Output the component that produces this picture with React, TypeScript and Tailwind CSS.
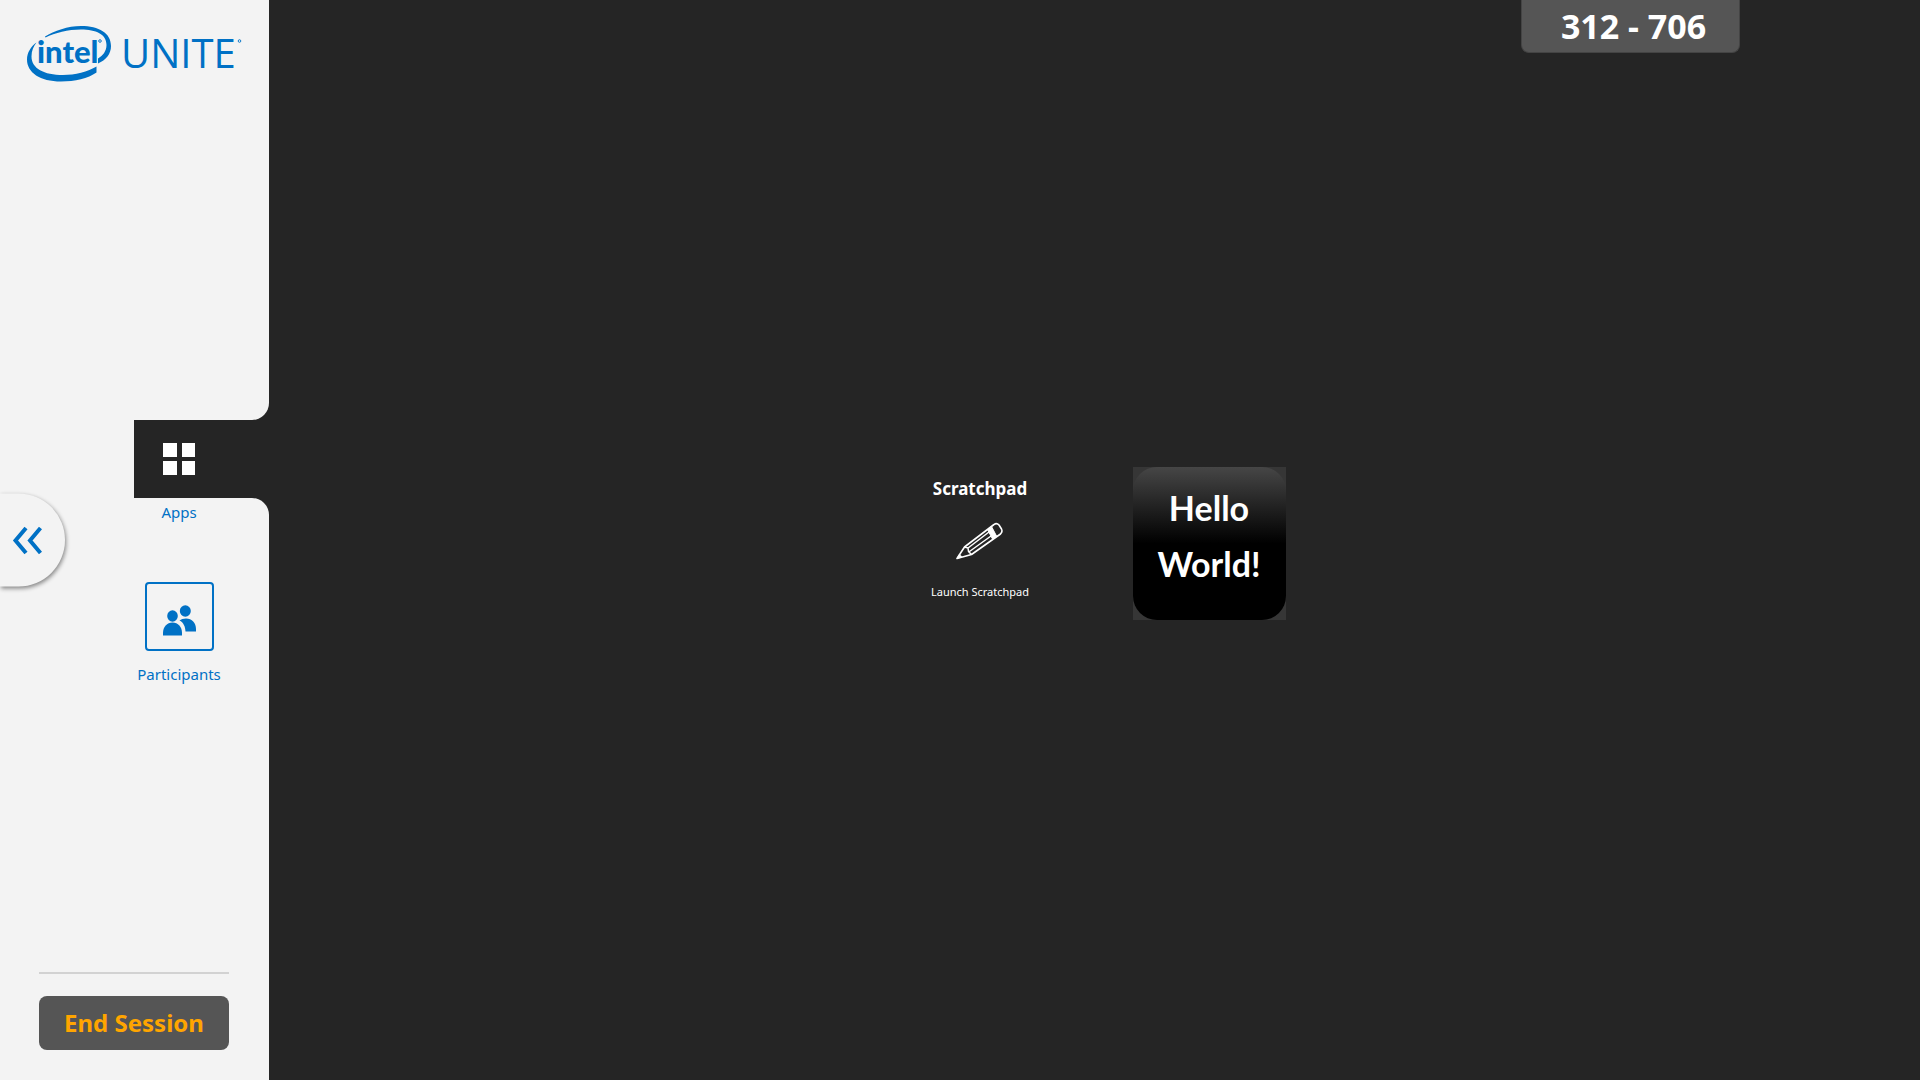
function Logo() {
  return (
    <svg className="block h-[62px] w-[216px]" viewBox="0 0 216 62" fill="#0071c5" role="img" aria-label="Intel Unite">
      <path d="M18 16.500C27 11 41 6 54 6C72 6 84 13 84 26C84 34 79 40 71 43.500L71 38.500C76 35.500 79.500 31 79.500 25C79.500 14 69 9.500 54 9.500C41 9.500 28 13 18.500 17.500Z" />
      <path d="M9.500 23C4 27 0 33 0 40C0 53 13 62 34 62C48 62 61 59 69.500 53L69.500 47C61 52 48 55.500 36 55.500C17 55.500 4.500 49 4.500 37C4.500 31 6.500 27 9.500 23Z" transform="translate(0 -0.500)" />
      <text x="10" y="43" fontFamily="Lato, sans-serif" fontWeight="900" fontSize="31">intel</text>
      <circle cx="73" cy="21" r="1.300" fill="none" stroke="#0071c5" strokeWidth="0.900" />
      <text x="94" y="48" fontFamily="'Open Sans', sans-serif" fontWeight="500" fontSize="40">UNITE</text>
      <circle cx="212.500" cy="21" r="1.300" fill="none" stroke="#0071c5" strokeWidth="0.900" />
    </svg>
  );
}

function PeopleIcon() {
  return (
    <svg className="block h-8 w-[34px]" viewBox="0 0 34 32" fill="#0071c5" aria-hidden="true">
      <ellipse cx="10.500" cy="12" rx="5.300" ry="5.700" />
      <path d="M1 31.500V29C1 23 5 18.500 10.500 18.500S20 23 20 29v2.500Z" />
      <ellipse cx="23.300" cy="7" rx="5.500" ry="5.700" />
      <path d="M17.500 16.500C19 15.200 21.500 14.500 24 14.500C30 14.500 34 19 34 25v2.500H23.500C23.300 22.500 21.500 18.500 17.500 16.500Z" />
    </svg>
  );
}

function PencilIcon() {
  return (
    <svg className="block h-[38px] w-12" viewBox="0 0 48 38" fill="none" stroke="#fff" strokeWidth="1.600" strokeLinejoin="round" aria-hidden="true">
      <path d="M1 36.500L8.500 25L38 2.500C39.500 1.300 41.500 1.300 43 3L45.500 7C46.500 9 46 10.500 44.500 12L15.500 32.500Z" />
      <path d="M31.500 7.500L35.500 4.500L40.500 14L36.500 17Z" fill="#fff" strokeWidth="1" />
      <path d="M8.500 25L12 26L12.500 29.500L15.500 32.500M12 26L33 10M13.500 29.500L35 14" strokeWidth="1.500" />
      <path d="M1 36.500L3.500 32L6 35Z" fill="#fff" strokeWidth="0.500" />
    </svg>
  );
}

export default function App() {
  return (
    <div className="relative flex min-h-screen bg-[#252525] font-['Noto_Sans',sans-serif] text-white">
      <aside className="flex w-[269px] shrink-0 flex-col text-[#0071c5]">
        <header className="grow-[420] basis-0 rounded-br-[17px] bg-[#f3f3f3]">
          <div className="pt-5 pl-[27px]">
            <Logo />
          </div>
        </header>
        <div className="flex h-[78px] bg-[#252525]">
          <div className="w-[134px] bg-[#f3f3f3]" />
          <button type="button" aria-labelledby="apps-label" className="grid w-[90px] place-content-center">
            <span className="grid grid-cols-2 gap-x-[5px] gap-y-1">
              <span className="h-3.5 w-3.5 bg-white" />
              <span className="h-3.5 w-[13px] bg-white" />
              <span className="h-3.5 w-3.5 bg-white" />
              <span className="h-3.5 w-[13px] bg-white" />
            </span>
          </button>
        </div>
        <div className="flex grow-[582] basis-0 flex-col rounded-tr-[17px] bg-[#f3f3f3]">
          <nav className="ml-[134px] flex w-[90px] flex-col items-center pt-1 text-[15px] leading-5">
            <span id="apps-label">Apps</span>
            <button type="button" className="mt-[60px] flex flex-col items-center">
              <span className="grid h-[69px] w-[69px] place-content-center rounded border-2 border-[#0071c5] pt-1.5">
                <PeopleIcon />
              </span>
              <span className="mt-[13px]">Participants</span>
            </button>
          </nav>
          <div className="mt-auto mr-10 mb-[30px] ml-[39px] border-t-2 border-[#d2d2d2] pt-[22px]">
            <button type="button" className="h-[54px] w-full rounded-lg bg-[#555] text-2xl font-bold text-[#ffa500]">
              End Session
            </button>
          </div>
        </div>
      </aside>

      <main className="flex grow items-center justify-center">
        <div className="mt-1.5 flex items-center gap-[76px]">
          <button type="button" className="flex h-[153px] w-[153px] flex-col items-center pt-3">
            <span className="text-[17px] leading-5 font-bold">Scratchpad</span>
            <span className="mt-[23px]"><PencilIcon /></span>
            <span className="mt-5 text-[11px] leading-6">Launch Scratchpad</span>
          </button>
          <button type="button" className="h-[153px] w-[153px] bg-[#363636]">
            <span className="flex h-full flex-col items-center rounded-[24px] bg-linear-to-b/srgb from-[#464646] via-black via-50% to-black pt-[13px] font-['Lato',sans-serif] text-[34px] leading-[56px] font-bold">
              <span>Hello</span>
              <span>World!</span>
            </span>
          </button>
        </div>
      </main>

      <div className="absolute top-0 right-[180px] flex h-[53px] w-[219px] items-center justify-center rounded-b-lg border border-t-0 border-[#444] bg-[#555] pl-1.5 text-[34px] leading-10 font-bold">
        312 - 706
      </div>

      <button type="button" aria-label="Collapse menu" className="absolute top-1/2 left-0 flex h-[93px] w-[65px] -translate-y-1/2 items-center rounded-r-full bg-[#f3f3f3] pl-3 shadow-[1px_2px_4px_rgba(0,0,0,0.45)]">
        <svg className="block h-7 w-[30px]" viewBox="0 0 30 28" fill="none" stroke="#0071c5" strokeWidth="4" aria-hidden="true">
          <path d="M14 1.500L3.500 14L14 26.500M28.500 1.500L18 14L28.500 26.500" />
        </svg>
      </button>
    </div>
  );
}
